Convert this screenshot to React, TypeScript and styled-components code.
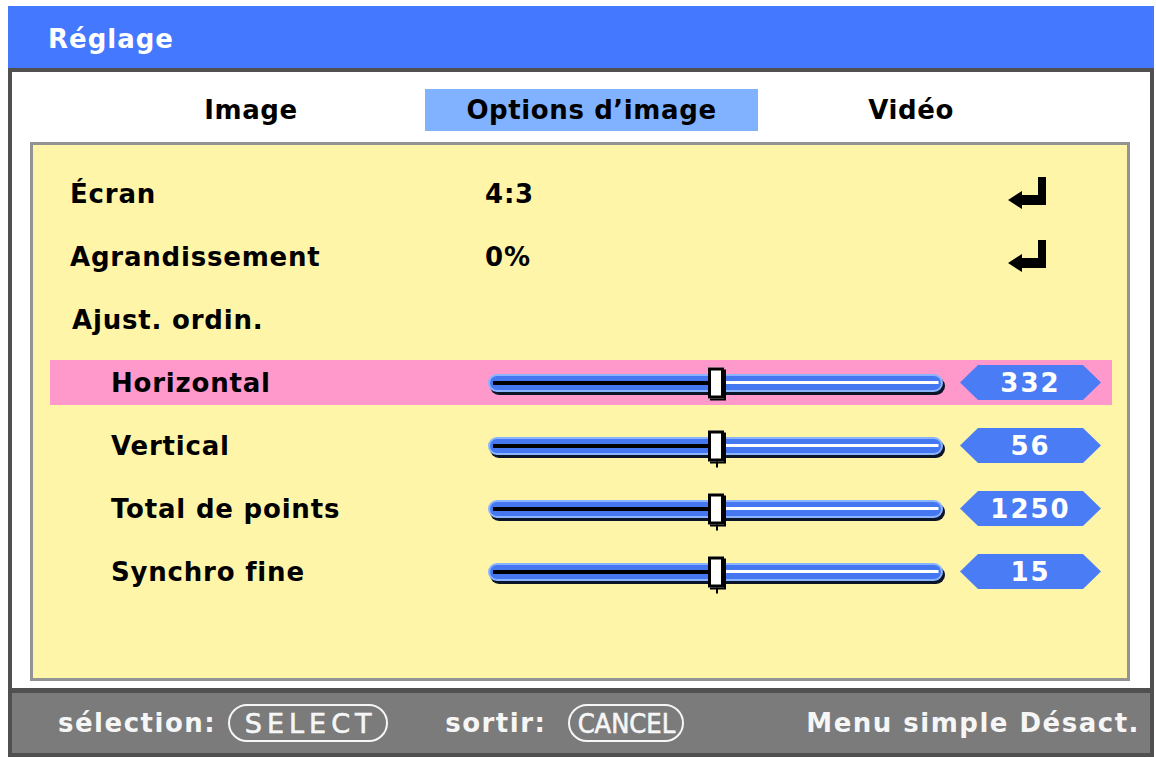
import styled, { createGlobalStyle } from 'styled-components';

const GlobalStyle = createGlobalStyle`
  *, *::before, *::after {
    box-sizing: border-box;
  }
  body {
    margin: 0;
    background: #ffffff;
    font-family: 'DejaVu Sans', 'Liberation Sans', sans-serif;
  }
`;

const Frame = styled.div`
  width: 1146px;
  margin: 6px 0 0 8px;
`;

const TitleBar = styled.div`
  height: 62px;
  background: #4479ff;
  color: #ffffff;
  font-size: 26px;
  font-weight: bold;
  letter-spacing: 1px;
  display: flex;
  align-items: center;
  padding-left: 40px;
  padding-top: 4px;
`;

const Body = styled.div`
  background: #ffffff;
  border: 4px solid #505050;
  border-bottom: none;
  padding: 0 20px 7px 18px;
`;

const Tabs = styled.div`
  display: grid;
  grid-template-columns: 348px 333px 306px;
  padding: 17px 0 11px 47px;
`;

const Tab = styled.div<{ $active?: boolean }>`
  height: 42px;
  display: flex;
  align-items: center;
  justify-content: center;
  font-size: 26px;
  font-weight: bold;
  letter-spacing: 0.6px;
  color: #000000;
  background: ${(p) => (p.$active ? '#80b2ff' : 'transparent')};
`;

const Panel = styled.div`
  background: #fff5a8;
  border: 3px solid #939393;
  height: 539px;
  padding: 26px 15px 0 17px;
  display: flex;
  flex-direction: column;
  gap: 18px;
`;

const Row = styled.div<{ $focus?: boolean }>`
  height: 45px;
  flex-shrink: 0;
  display: grid;
  grid-template-columns: 435px 1fr;
  align-items: center;
  background: ${(p) => (p.$focus ? '#ff99cc' : 'transparent')};
`;

const Label = styled.div<{ $indent: number }>`
  padding-left: ${(p) => p.$indent}px;
  font-size: 26px;
  font-weight: bold;
  letter-spacing: 0.8px;
  color: #000000;
`;

const ValueCell = styled.div`
  display: flex;
  align-items: center;
  padding-right: 66px;
`;

const Value = styled.div`
  flex: 1;
  font-size: 26px;
  font-weight: bold;
  letter-spacing: 0.8px;
  color: #000000;
`;

const SliderCell = styled.div`
  display: flex;
  align-items: center;
  gap: 17px;
  padding-left: 3px;
`;

const Track = styled.div`
  position: relative;
  width: 455px;
  height: 18px;
  border: 2px solid #8ab4ff;
  border-radius: 9px;
  box-shadow: 2px 3px 0 #0c1428;
  background:
    linear-gradient(#000000, #000000) left 3px center / 50% 4px no-repeat,
    linear-gradient(#ffffff, #ffffff) right 3px center / 50% 3px no-repeat,
    #4578f0;
`;

const Thumb = styled.div<{ $tick?: boolean }>`
  position: absolute;
  top: 50%;
  width: 16px;
  height: 31px;
  background: #ffffff;
  border: 3px solid #000000;
  box-shadow: 2px 2px 0 #000000;
  transform: translate(-50%, -50%);

  &::after {
    content: '';
    display: ${(p) => (p.$tick ? 'block' : 'none')};
    position: absolute;
    left: 50%;
    top: calc(100% + 3px);
    width: 2px;
    height: 6px;
    background: #000000;
  }
`;

const Badge = styled.div`
  width: 141px;
  height: 35px;
  background: #4a7df5;
  clip-path: polygon(18px 0, calc(100% - 18px) 0, 100% 50%, calc(100% - 18px) 100%, 18px 100%, 0 50%);
  display: flex;
  align-items: center;
  justify-content: center;
  color: #ffffff;
  font-size: 26px;
  font-weight: bold;
  letter-spacing: 2px;
`;

const Footer = styled.div`
  height: 69px;
  background: #7b7b7b;
  border: 4px solid #505050;
  border-top-width: 5px;
  display: flex;
  align-items: center;
  padding: 0 10px 0 46px;
  color: #f6f6f6;
`;

const Hint = styled.span`
  font-size: 26px;
  font-weight: bold;
  letter-spacing: 1.5px;
`;

const KeyPill = styled.span<{ $width: number; $narrow?: boolean }>`
  width: ${(p) => p.$width}px;
  height: 38px;
  border: 2px solid #f6f6f6;
  border-radius: 19px;
  display: flex;
  align-items: center;
  justify-content: center;
  font-family: ${(p) => (p.$narrow ? "'DejaVu Sans Condensed', 'DejaVu Sans', sans-serif" : "'DejaVu Sans', sans-serif")};
  font-size: 27px;
  -webkit-text-stroke: 0.6px #f6f6f6;
  letter-spacing: ${(p) => (p.$narrow ? '0px' : '5px')};
  padding-left: ${(p) => (p.$narrow ? '0px' : '5px')};
`;

const Spacer = styled.span<{ $w: number }>`
  width: ${(p) => p.$w}px;
  flex-shrink: 0;
`;

const Grow = styled.span`
  flex: 1;
`;

const EnterIcon = () => (
  <svg width="38" height="33" viewBox="0 0 38 33">
    <path d="M30 0 H38 V28 H14 V32 L0 23 L14 14 V18 H30 Z" fill="#000000" />
  </svg>
);

type Slider = { name: string; value: string; focus?: boolean };

const sliders: Slider[] = [
  { name: 'Horizontal', value: '332', focus: true },
  { name: 'Vertical', value: '56' },
  { name: 'Total de points', value: '1250' },
  { name: 'Synchro fine', value: '15' },
];

export default function App() {
  return (
    <>
      <GlobalStyle />
      <Frame>
        <TitleBar>Réglage</TitleBar>
        <Body>
          <Tabs>
            <Tab>Image</Tab>
            <Tab $active>Options d’image</Tab>
            <Tab>Vidéo</Tab>
          </Tabs>
          <Panel>
            <Row>
              <Label $indent={20}>Écran</Label>
              <ValueCell>
                <Value>4:3</Value>
                <EnterIcon />
              </ValueCell>
            </Row>
            <Row>
              <Label $indent={20}>Agrandissement</Label>
              <ValueCell>
                <Value>0%</Value>
                <EnterIcon />
              </ValueCell>
            </Row>
            <Row>
              <Label $indent={22}>Ajust. ordin.</Label>
            </Row>
            {sliders.map((s) => (
              <Row key={s.name} $focus={s.focus}>
                <Label $indent={61}>{s.name}</Label>
                <SliderCell>
                  <Track>
                    <Thumb $tick={!s.focus} style={{ left: '50%' }} />
                  </Track>
                  <Badge>{s.value}</Badge>
                </SliderCell>
              </Row>
            ))}
          </Panel>
        </Body>
        <Footer>
          <Hint>sélection:</Hint>
          <Spacer $w={12} />
          <KeyPill $width={160}>SELECT</KeyPill>
          <Spacer $w={57} />
          <Hint>sortir:</Hint>
          <Spacer $w={22} />
          <KeyPill $width={116} $narrow>CANCEL</KeyPill>
          <Grow />
          <Hint>Menu simple Désact.</Hint>
        </Footer>
      </Frame>
    </>
  );
}
